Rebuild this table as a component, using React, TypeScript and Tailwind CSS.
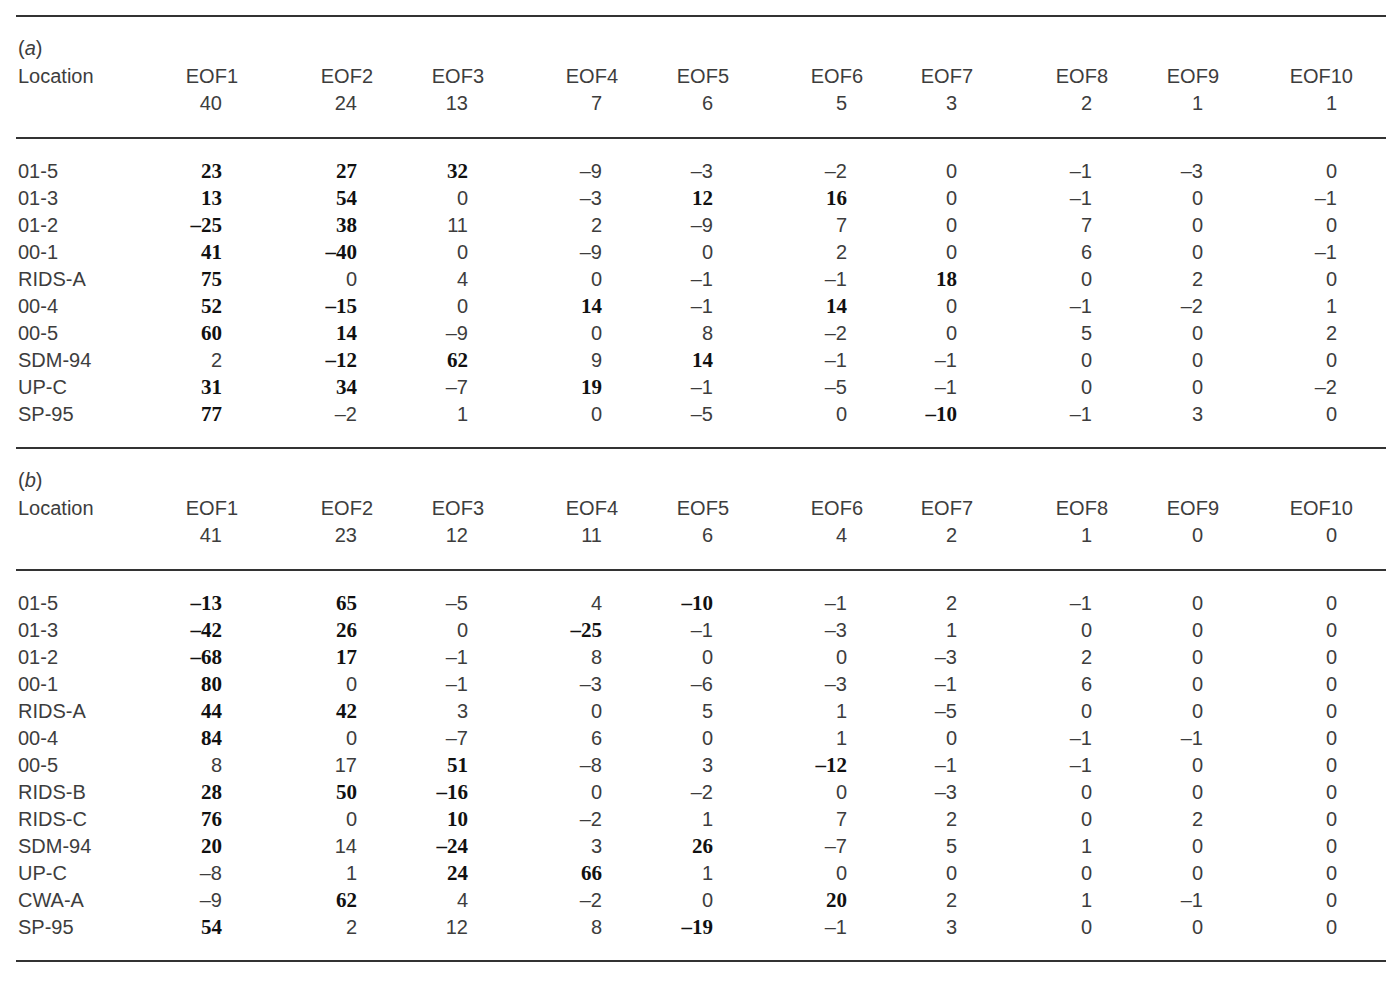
import React from 'react';

type Cell = { v: string; b?: boolean };

interface SectionData {
  label: string;
  variance: string[];
  rows: { name: string; cells: Cell[] }[];
}

// "*" prefix marks a bold value
const parse = (line: string): Cell[] =>
  line.split(' ').map((s) => {
    const b = s.startsWith('*');
    const raw = b ? s.slice(1) : s;
    return { v: raw.replace(/-/g, '–'), b };
  });

const sectionA: SectionData = {
  label: 'a',
  variance: ['40', '24', '13', '7', '6', '5', '3', '2', '1', '1'],
  rows: [
    { name: '01-5', cells: parse('*23 *27 *32 -9 -3 -2 0 -1 -3 0') },
    { name: '01-3', cells: parse('*13 *54 0 -3 *12 *16 0 -1 0 -1') },
    { name: '01-2', cells: parse('*-25 *38 11 2 -9 7 0 7 0 0') },
    { name: '00-1', cells: parse('*41 *-40 0 -9 0 2 0 6 0 -1') },
    { name: 'RIDS-A', cells: parse('*75 0 4 0 -1 -1 *18 0 2 0') },
    { name: '00-4', cells: parse('*52 *-15 0 *14 -1 *14 0 -1 -2 1') },
    { name: '00-5', cells: parse('*60 *14 -9 0 8 -2 0 5 0 2') },
    { name: 'SDM-94', cells: parse('2 *-12 *62 9 *14 -1 -1 0 0 0') },
    { name: 'UP-C', cells: parse('*31 *34 -7 *19 -1 -5 -1 0 0 -2') },
    { name: 'SP-95', cells: parse('*77 -2 1 0 -5 0 *-10 -1 3 0') },
  ],
};

const sectionB: SectionData = {
  label: 'b',
  variance: ['41', '23', '12', '11', '6', '4', '2', '1', '0', '0'],
  rows: [
    { name: '01-5', cells: parse('*-13 *65 -5 4 *-10 -1 2 -1 0 0') },
    { name: '01-3', cells: parse('*-42 *26 0 *-25 -1 -3 1 0 0 0') },
    { name: '01-2', cells: parse('*-68 *17 -1 8 0 0 -3 2 0 0') },
    { name: '00-1', cells: parse('*80 0 -1 -3 -6 -3 -1 6 0 0') },
    { name: 'RIDS-A', cells: parse('*44 *42 3 0 5 1 -5 0 0 0') },
    { name: '00-4', cells: parse('*84 0 -7 6 0 1 0 -1 -1 0') },
    { name: '00-5', cells: parse('8 17 *51 -8 3 *-12 -1 -1 0 0') },
    { name: 'RIDS-B', cells: parse('*28 *50 *-16 0 -2 0 -3 0 0 0') },
    { name: 'RIDS-C', cells: parse('*76 0 *10 -2 1 7 2 0 2 0') },
    { name: 'SDM-94', cells: parse('*20 14 *-24 3 *26 -7 5 1 0 0') },
    { name: 'UP-C', cells: parse('-8 1 *24 *66 1 0 0 0 0 0') },
    { name: 'CWA-A', cells: parse('-9 *62 4 -2 0 *20 2 1 -1 0') },
    { name: 'SP-95', cells: parse('*54 2 12 8 *-19 -1 3 0 0 0') },
  ],
};

const grid =
  'grid grid-cols-[144px_78px_135px_111px_134px_111px_134px_110px_135px_111px_134px] leading-[27px]';

const Rule = () => <div className="h-[2px] bg-[#333]" />;

const Section = ({ data }: { data: SectionData }) => (
  <>
    <div className="pt-[16px] pb-[20px]">
      <div className="pl-[2px]">
        (<i>{data.label}</i>)
      </div>
      <div className={grid}>
        <div className="pl-[2px]">Location</div>
        {data.variance.map((_, i) => (
          <div key={i} className="text-right">
            EOF{i + 1}
          </div>
        ))}
        <div />
        {data.variance.map((v, i) => (
          <div key={i} className="pr-4 text-right">
            {v}
          </div>
        ))}
      </div>
    </div>
    <Rule />
    <div className="py-[19px]">
      {data.rows.map((row) => (
        <div key={row.name} className={grid}>
          <div className="pl-[2px]">{row.name}</div>
          {row.cells.map((c, i) => (
            <div key={i} className="pr-4 text-right">
              {c.b ? (
                <span className="font-['Liberation_Serif',serif] text-[21px] font-bold text-[#111]">
                  {c.v}
                </span>
              ) : (
                c.v
              )}
            </div>
          ))}
        </div>
      ))}
    </div>
    <Rule />
  </>
);

const App = () => {
  return (
    <div className="min-h-[981px] w-[1400px] bg-white pt-[15px] pl-4 font-['Liberation_Sans',sans-serif] text-[20px] text-[#3d3d3d]">
      <div className="w-[1370px]">
        <Rule />
        <Section data={sectionA} />
        <Section data={sectionB} />
      </div>
    </div>
  );
};

export default App;
